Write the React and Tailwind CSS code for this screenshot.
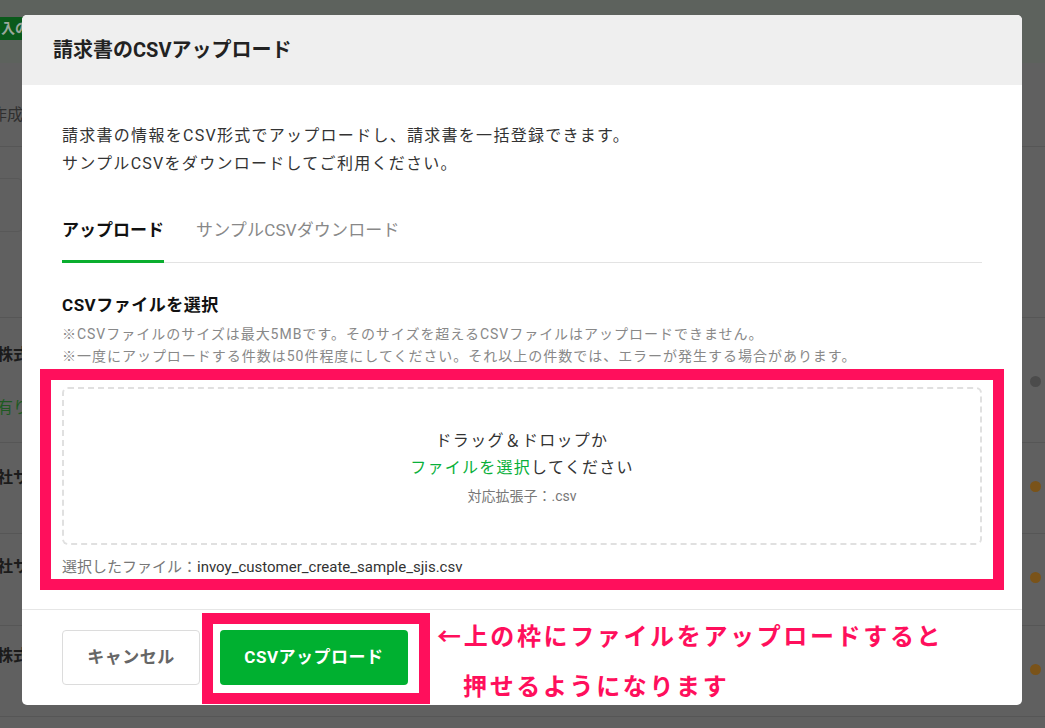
import React from 'react';

const Row = ({ height, left, leftClass, dot, padTop }) => (
    <div className={`flex justify-between border-b border-[#565656] ${height}`}>
        <div className={`-ml-[3px] text-[16px] font-bold leading-[20px] ${padTop} ${leftClass}`}>{left}</div>
        {dot && <div className={`mr-[4px] mt-[38px] h-[11px] w-[11px] rounded-full ${dot}`} />}
    </div>
);

const App = () => {
    return (
        <div className="relative h-[728px] w-full overflow-hidden bg-[#606060] font-['Roboto','Noto_Sans_CJK_JP',sans-serif]">
            {/* page behind the overlay */}
            <div className="h-[63px] bg-[#5d625d] pt-[17px]">
                <div className="flex h-[23px] w-[40px] items-center bg-[#0a5a1b] pl-[1px] text-[14px] font-bold text-[#9aa89c]">入の</div>
            </div>
            <div className="h-[84px] border-b border-[#565656] pt-[42px]">
                <div className="-ml-[9px] text-[16px] leading-[20px] text-[#2f2f2f]">作成</div>
            </div>
            <div className="h-[171px] border-b border-[#565656] pt-[31px]">
                <div className="-ml-[20px] h-[54px] w-[42px] rounded border border-[#585858]" />
            </div>
            <div className="flex h-[125px] justify-between border-b border-[#565656]">
                <div className="-ml-[3px] pt-[27px] text-[16px] leading-[20px]">
                    <div className="font-bold text-[#1b1b1b]">株式</div>
                    <div className="mt-[33px] text-[#1e5a22]">有り</div>
                </div>
                <div className="mr-[4px] mt-[58px] h-[11px] w-[11px] rounded-full bg-[#4b4b4b]" />
            </div>
            <Row height="h-[91px]" left="社サ" leftClass="text-[#1b1b1b]" padTop="pt-[25px]" dot="bg-[#7a5319]" />
            <Row height="h-[92px]" left="社サ" leftClass="text-[#1b1b1b]" padTop="pt-[23px]" dot="bg-[#7a5319]" />
            <Row height="h-[91px]" left="株式" leftClass="text-[#1b1b1b]" padTop="pt-[20px]" dot="bg-[#7a5319]" />

            {/* modal */}
            <div className="absolute inset-0 pl-[22px] pt-[15px]">
                <div className="flex h-[690px] w-[1000px] flex-col overflow-hidden rounded-[5px] bg-white">
                    <div className="flex h-[70px] items-center bg-[#efefef] px-[31px]">
                        <h1 className="text-[20px] font-bold text-[#222]">請求書のCSVアップロード</h1>
                    </div>

                    <div className="px-[40px] pt-[37px]">
                        <p className="text-[16px] leading-[28px] tracking-[0.08em] text-[#333]">
                            請求書の情報をCSV形式でアップロードし、請求書を一括登録できます。
                            <br />
                            サンプルCSVをダウンロードしてご利用ください。
                        </p>

                        <div className="mt-[30px] flex gap-[32px] border-b border-[#e3e3e3]">
                            <div className="-mb-px border-b-[3px] border-[#0aae2f] pt-[10px] pb-[18px] text-[17px] font-bold leading-[24px] text-[#111]">
                                アップロード
                            </div>
                            <div className="pt-[10px] pb-[18px] text-[17px] leading-[24px] tracking-[0.01em] text-[#888]">
                                サンプルCSVダウンロード
                            </div>
                        </div>

                        <h2 className="mt-[30px] text-[17px] font-bold leading-[24px] tracking-[0.03em] text-[#111]">CSVファイルを選択</h2>
                        <div className="mt-[6px] text-[14px] leading-[22px] tracking-[0.07em] text-[#888]">
                            <p>※CSVファイルのサイズは最大5MBです。そのサイズを超えるCSVファイルはアップロードできません。</p>
                            <p>※一度にアップロードする件数は50件程度にしてください。それ以上の件数では、エラーが発生する場合があります。</p>
                        </div>

                        <div className="relative mt-[20px]">
                            <div className="flex h-[158px] flex-col items-center justify-center rounded-[6px] border-2 border-dashed border-[#e0e0e0] text-center">
                                <p className="text-[16px] leading-[27px] tracking-[0.08em] text-[#333]">ドラッグ＆ドロップか</p>
                                <p className="text-[16px] leading-[27px] tracking-[0.08em] text-[#333]">
                                    <span className="text-[#09b03a]">ファイルを選択</span>してください
                                </p>
                                <p className="mt-[5px] text-[14px] leading-[20px] text-[#777]">対応拡張子：.csv</p>
                            </div>
                            <p className="mt-[12px] text-[15px] leading-[20px] text-[#777]">
                                選択したファイル：<span className="text-[#333]">invoy_customer_create_sample_sjis.csv</span>
                            </p>
                            <div className="pointer-events-none absolute -top-[18px] -left-[22px] -right-[22px] -bottom-[13px] border-[11px] border-[#ff0f5c]" />
                        </div>
                    </div>

                    <div className="relative mt-[32px] flex gap-[20px] border-t border-[#e6e6e6] px-[40px] pt-[20px]">
                        <button className="h-[55px] w-[138px] rounded-[4px] border border-[#dcdcdc] bg-white text-[17px] font-bold tracking-[0.03em] text-[#666]">
                            キャンセル
                        </button>
                        <div className="relative">
                            <button className="h-[55px] w-[188px] rounded-[4px] bg-[#00b030] text-[17px] font-bold tracking-[0.03em] text-white">
                                CSVアップロード
                            </button>
                            <div className="pointer-events-none absolute -top-[17px] -left-[18px] -right-[22px] -bottom-[19px] border-[11px] border-[#ff0f5c]" />
                        </div>
                        <div className="absolute left-[415px] top-[2px] text-[24px] font-bold leading-[50px] tracking-[0.11em] text-[#ff0f5c]">
                            <p>←上の枠にファイルをアップロードすると</p>
                            <p className="pl-[26px]">押せるようになります</p>
                        </div>
                    </div>
                </div>
            </div>
        </div>
    );
};

export default App;
